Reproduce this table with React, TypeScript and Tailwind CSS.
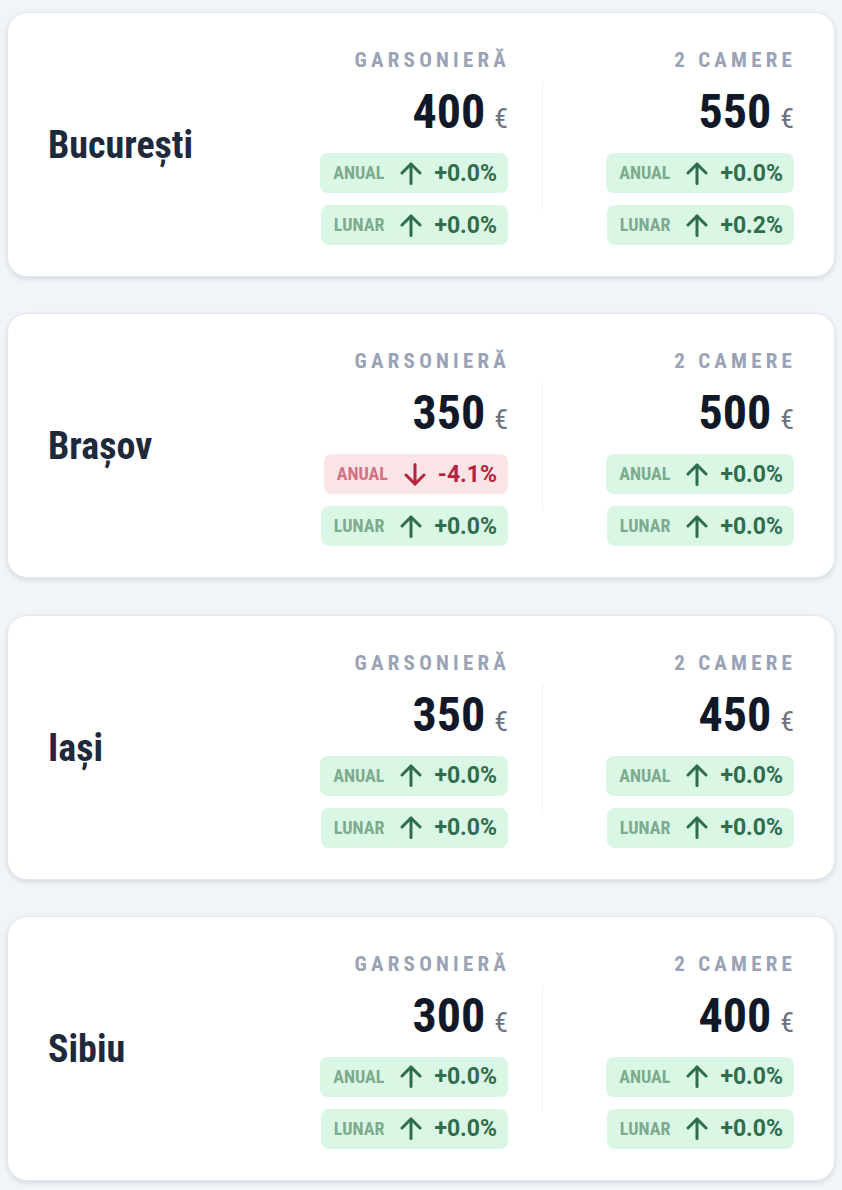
type Change = { value: string; up: boolean };
type Flat = { label: string; price: number; anual: Change; lunar: Change };
type City = { name: string; flats: Flat[] };

const cities: City[] = [
  {
    name: "București",
    flats: [
      { label: "Garsonieră", price: 400, anual: { value: "+0.0%", up: true }, lunar: { value: "+0.0%", up: true } },
      { label: "2 camere", price: 550, anual: { value: "+0.0%", up: true }, lunar: { value: "+0.2%", up: true } },
    ],
  },
  {
    name: "Brașov",
    flats: [
      { label: "Garsonieră", price: 350, anual: { value: "-4.1%", up: false }, lunar: { value: "+0.0%", up: true } },
      { label: "2 camere", price: 500, anual: { value: "+0.0%", up: true }, lunar: { value: "+0.0%", up: true } },
    ],
  },
  {
    name: "Iași",
    flats: [
      { label: "Garsonieră", price: 350, anual: { value: "+0.0%", up: true }, lunar: { value: "+0.0%", up: true } },
      { label: "2 camere", price: 450, anual: { value: "+0.0%", up: true }, lunar: { value: "+0.0%", up: true } },
    ],
  },
  {
    name: "Sibiu",
    flats: [
      { label: "Garsonieră", price: 300, anual: { value: "+0.0%", up: true }, lunar: { value: "+0.0%", up: true } },
      { label: "2 camere", price: 400, anual: { value: "+0.0%", up: true }, lunar: { value: "+0.0%", up: true } },
    ],
  },
];

function Arrow({ up }: { up: boolean }) {
  return (
    <svg
      width="22"
      height="23"
      viewBox="0 0 22 23"
      fill="none"
      stroke="currentColor"
      strokeWidth="3"
      strokeLinecap="round"
      strokeLinejoin="round"
      className={up ? "" : "rotate-180"}
    >
      <path d="M11 21.5V2" />
      <path d="M2 11l9-9 9 9" />
    </svg>
  );
}

function Pill({ period, change }: { period: string; change: Change }) {
  return (
    <div
      className={
        change.up
          ? "flex h-10 items-center rounded-lg bg-[#daf6e4] pl-[13px] pr-[11px] text-[#2f6d4d]"
          : "flex h-10 items-center rounded-lg bg-[#fbe4e6] pl-[13px] pr-[11px] text-[#b3253f]"
      }
    >
      <span
        className={
          change.up
            ? "text-[18px] font-bold uppercase leading-none text-[#7dab8e]"
            : "text-[18px] font-bold uppercase leading-none text-[#d27383]"
        }
      >
        {period}
      </span>
      <span className="ml-[16px]">
        <Arrow up={change.up} />
      </span>
      <span className="ml-[12px] text-[23px] font-bold leading-none font-stretch-normal">{change.value}</span>
    </div>
  );
}

function FlatColumn({ flat }: { flat: Flat }) {
  return (
    <div className="flex w-[217px] flex-col items-end">
      <div className="-mr-[2px] text-[21px] font-bold uppercase leading-none tracking-[0.2em] text-[#9aa3b5]">
        {flat.label}
      </div>
      <div className="mt-[17px] flex items-baseline gap-[9px] leading-none">
        <span className="text-[48px] font-bold text-[#111827]">{flat.price}</span>
        <span className="text-[28px] text-[#6b7280]">€</span>
      </div>
      <div className="mt-[17px] flex flex-col items-end gap-[12px]">
        <Pill period="Anual" change={flat.anual} />
        <Pill period="Lunar" change={flat.lunar} />
      </div>
    </div>
  );
}

function CityCard({ city }: { city: City }) {
  return (
    <div className="flex items-center rounded-[20px] border border-[#e2e8f0] bg-white pb-[31px] pl-10 pr-10 pt-[37px] shadow-[0_2px_5px_rgba(15,23,42,0.12)]">
      <h2 className="mb-[5px] flex-1 text-[38px] font-bold leading-none text-[#1e293b]">{city.name}</h2>
      <div className="flex items-center">
        <FlatColumn flat={city.flats[0]} />
        <div className="mx-[34px] mb-[5px] h-[127px] w-px bg-[#eef2f6]" />
        <FlatColumn flat={city.flats[1]} />
      </div>
    </div>
  );
}

export default function App() {
  return (
    <div className="min-h-screen bg-[#f1f5f9] px-[7px] pb-[9px] pt-[12px] font-['Roboto',sans-serif] font-stretch-condensed">
      <div className="flex flex-col gap-[36.3px]">
        {cities.map((c) => (
          <CityCard key={c.name} city={c} />
        ))}
      </div>
    </div>
  );
}
